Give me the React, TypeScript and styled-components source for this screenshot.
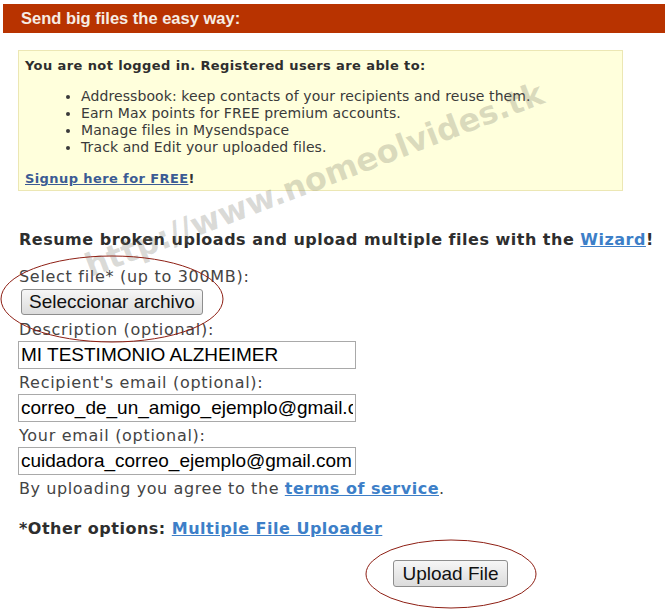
import React from "react";
import styled, { createGlobalStyle } from "styled-components";

const Global = createGlobalStyle`
  html, body { margin: 0; padding: 0; background: #fff; }
  body { font-family: "DejaVu Sans", Verdana, sans-serif; color: #333; }
`;

const Page = styled.div`
  position: relative;
  width: 665px;
  height: 610px;
  overflow: hidden;
  padding-top: 4px;
  box-sizing: border-box;
`;

const Header = styled.div`
  margin-left: 3px;
  height: 29px;
  background: #b83300;
  color: #f6ece4;
  font-family: "Liberation Sans", Arial, sans-serif;
  font-weight: bold;
  font-size: 16.5px;
  display: flex;
  align-items: center;
  padding-left: 18px;
`;

const InfoBox = styled.div`
  margin: 17px 0 0 18px;
  width: 605px;
  height: 141px;
  box-sizing: border-box;
  background: #ffffdc;
  border: 1px solid #ece7b4;
  padding: 6px 6px 0 6px;
`;

const InfoTitle = styled.div`
  font-weight: bold;
  font-size: 13px;
  letter-spacing: 0.4px;
  line-height: 18px;
  color: #2e2e2e;
`;

const List = styled.ul`
  margin: 13px 0 14px 0;
  padding-left: 56px;
  font-size: 14px;
  letter-spacing: 0.1px;
  line-height: 17px;
  color: #3a3a3a;
`;

const SignupLine = styled.div`
  font-weight: bold;
  font-size: 13px;
  letter-spacing: 0.4px;
  line-height: 18px;
  color: #333;
`;

const DarkLink = styled.a`
  color: #3b5b94;
  text-decoration: underline;
`;

const Form = styled.div`
  padding-left: 18px;
  font-size: 16px;
  color: #333;
`;

const Lead = styled.div`
  margin-top: 38px;
  padding-left: 1px;
  font-weight: bold;
  letter-spacing: 0.5px;
  line-height: 22px;
  color: #2e2e2e;
`;

const BlueLink = styled.a`
  color: #3d7fc8;
  text-decoration: underline;
  font-weight: bold;
`;

const Label = styled.div<{ $top?: number }>`
  padding-left: 1px;
  padding-top: ${(p) => p.$top ?? 3}px;
  line-height: 22px;
  letter-spacing: 0.7px;
  color: #444;
`;

const Button = styled.button`
  display: block;
  font-family: "Liberation Sans", Arial, sans-serif;
  font-size: 19px;
  color: #111;
  height: 26px;
  padding: 0;
  border: 1px solid #8e8e8e;
  border-radius: 3px;
  background: linear-gradient(#f6f6f6, #dcdcdc);
  box-sizing: border-box;
`;

const FileButton = styled(Button)`
  margin: 1px 0 0 3px;
  width: 182px;
`;

const Input = styled.input`
  display: block;
  width: 338px;
  height: 28px;
  box-sizing: border-box;
  border: 1px solid #a9a9a9;
  padding: 0 2px;
  font-family: "Liberation Sans", Arial, sans-serif;
  font-size: 19px;
  color: #000;
  background: #fff;
  outline: none;
`;

const Agree = styled.div`
  padding-left: 1px;
  padding-top: 3px;
  line-height: 22px;
  letter-spacing: 0.6px;
  color: #444;
`;

const AgreeLink = styled(BlueLink)`
  letter-spacing: 0.5px;
`;

const Other = styled.div`
  margin-top: 18px;
  padding-left: 1px;
  line-height: 22px;
  font-weight: bold;
  letter-spacing: 0.5px;
  color: #2e2e2e;
`;

const SubmitRow = styled.div`
  display: flex;
  padding-left: 375px;
  margin-top: 20px;
`;

const UploadButton = styled(Button)`
  width: 115px;
  height: 27px;
`;

const Overlay = styled.svg`
  position: absolute;
  left: 0;
  top: 0;
  pointer-events: none;
`;

const Watermark = styled.div`
  position: absolute;
  left: 92px;
  top: 250px;
  line-height: 32px;
  transform-origin: left bottom;
  transform: rotate(-21deg);
  font-family: "DejaVu Sans", Verdana, sans-serif;
  font-weight: bold;
  font-size: 32px;
  color: rgba(110, 110, 95, 0.25);
  white-space: nowrap;
  pointer-events: none;
`;

export default function App() {
  return (
    <Page>
      <Global />
      <Header>Send big files the easy way:</Header>
      <InfoBox>
        <InfoTitle>You are not logged in. Registered users are able to:</InfoTitle>
        <List>
          <li>Addressbook: keep contacts of your recipients and reuse them.</li>
          <li>Earn Max points for FREE premium accounts.</li>
          <li>Manage files in Mysendspace</li>
          <li>Track and Edit your uploaded files.</li>
        </List>
        <SignupLine>
          <DarkLink href="#">Signup here for FREE</DarkLink>!
        </SignupLine>
      </InfoBox>
      <Form>
        <Lead>
          Resume broken uploads and upload multiple files with the{" "}
          <BlueLink href="#">Wizard</BlueLink>!
        </Lead>
        <Label $top={15}>Select file* (up to 300MB):</Label>
        <FileButton>Seleccionar archivo</FileButton>
        <Label $top={4}>Description (optional):</Label>
        <Input readOnly value="MI TESTIMONIO ALZHEIMER" />
        <Label>Recipient's email (optional):</Label>
        <Input readOnly value="correo_de_un_amigo_ejemplo@gmail.com" />
        <Label>Your email (optional):</Label>
        <Input readOnly value="cuidadora_correo_ejemplo@gmail.com" />
        <Agree>
          By uploading you agree to the <AgreeLink href="#">terms of service</AgreeLink>.
        </Agree>
        <Other>
          *Other options: <BlueLink href="#">Multiple File Uploader</BlueLink>
        </Other>
        <SubmitRow>
          <UploadButton>Upload File</UploadButton>
        </SubmitRow>
      </Form>
      <Watermark>http://www.nomeolvides.tk</Watermark>
      <Overlay width="665" height="610" viewBox="0 0 665 610">
        <ellipse cx="112" cy="299" rx="111" ry="43" fill="none" stroke="#8e1f14" strokeWidth="1" />
        <ellipse cx="451" cy="574" rx="85" ry="34" fill="none" stroke="#8e1f14" strokeWidth="1" />
      </Overlay>
    </Page>
  );
}
